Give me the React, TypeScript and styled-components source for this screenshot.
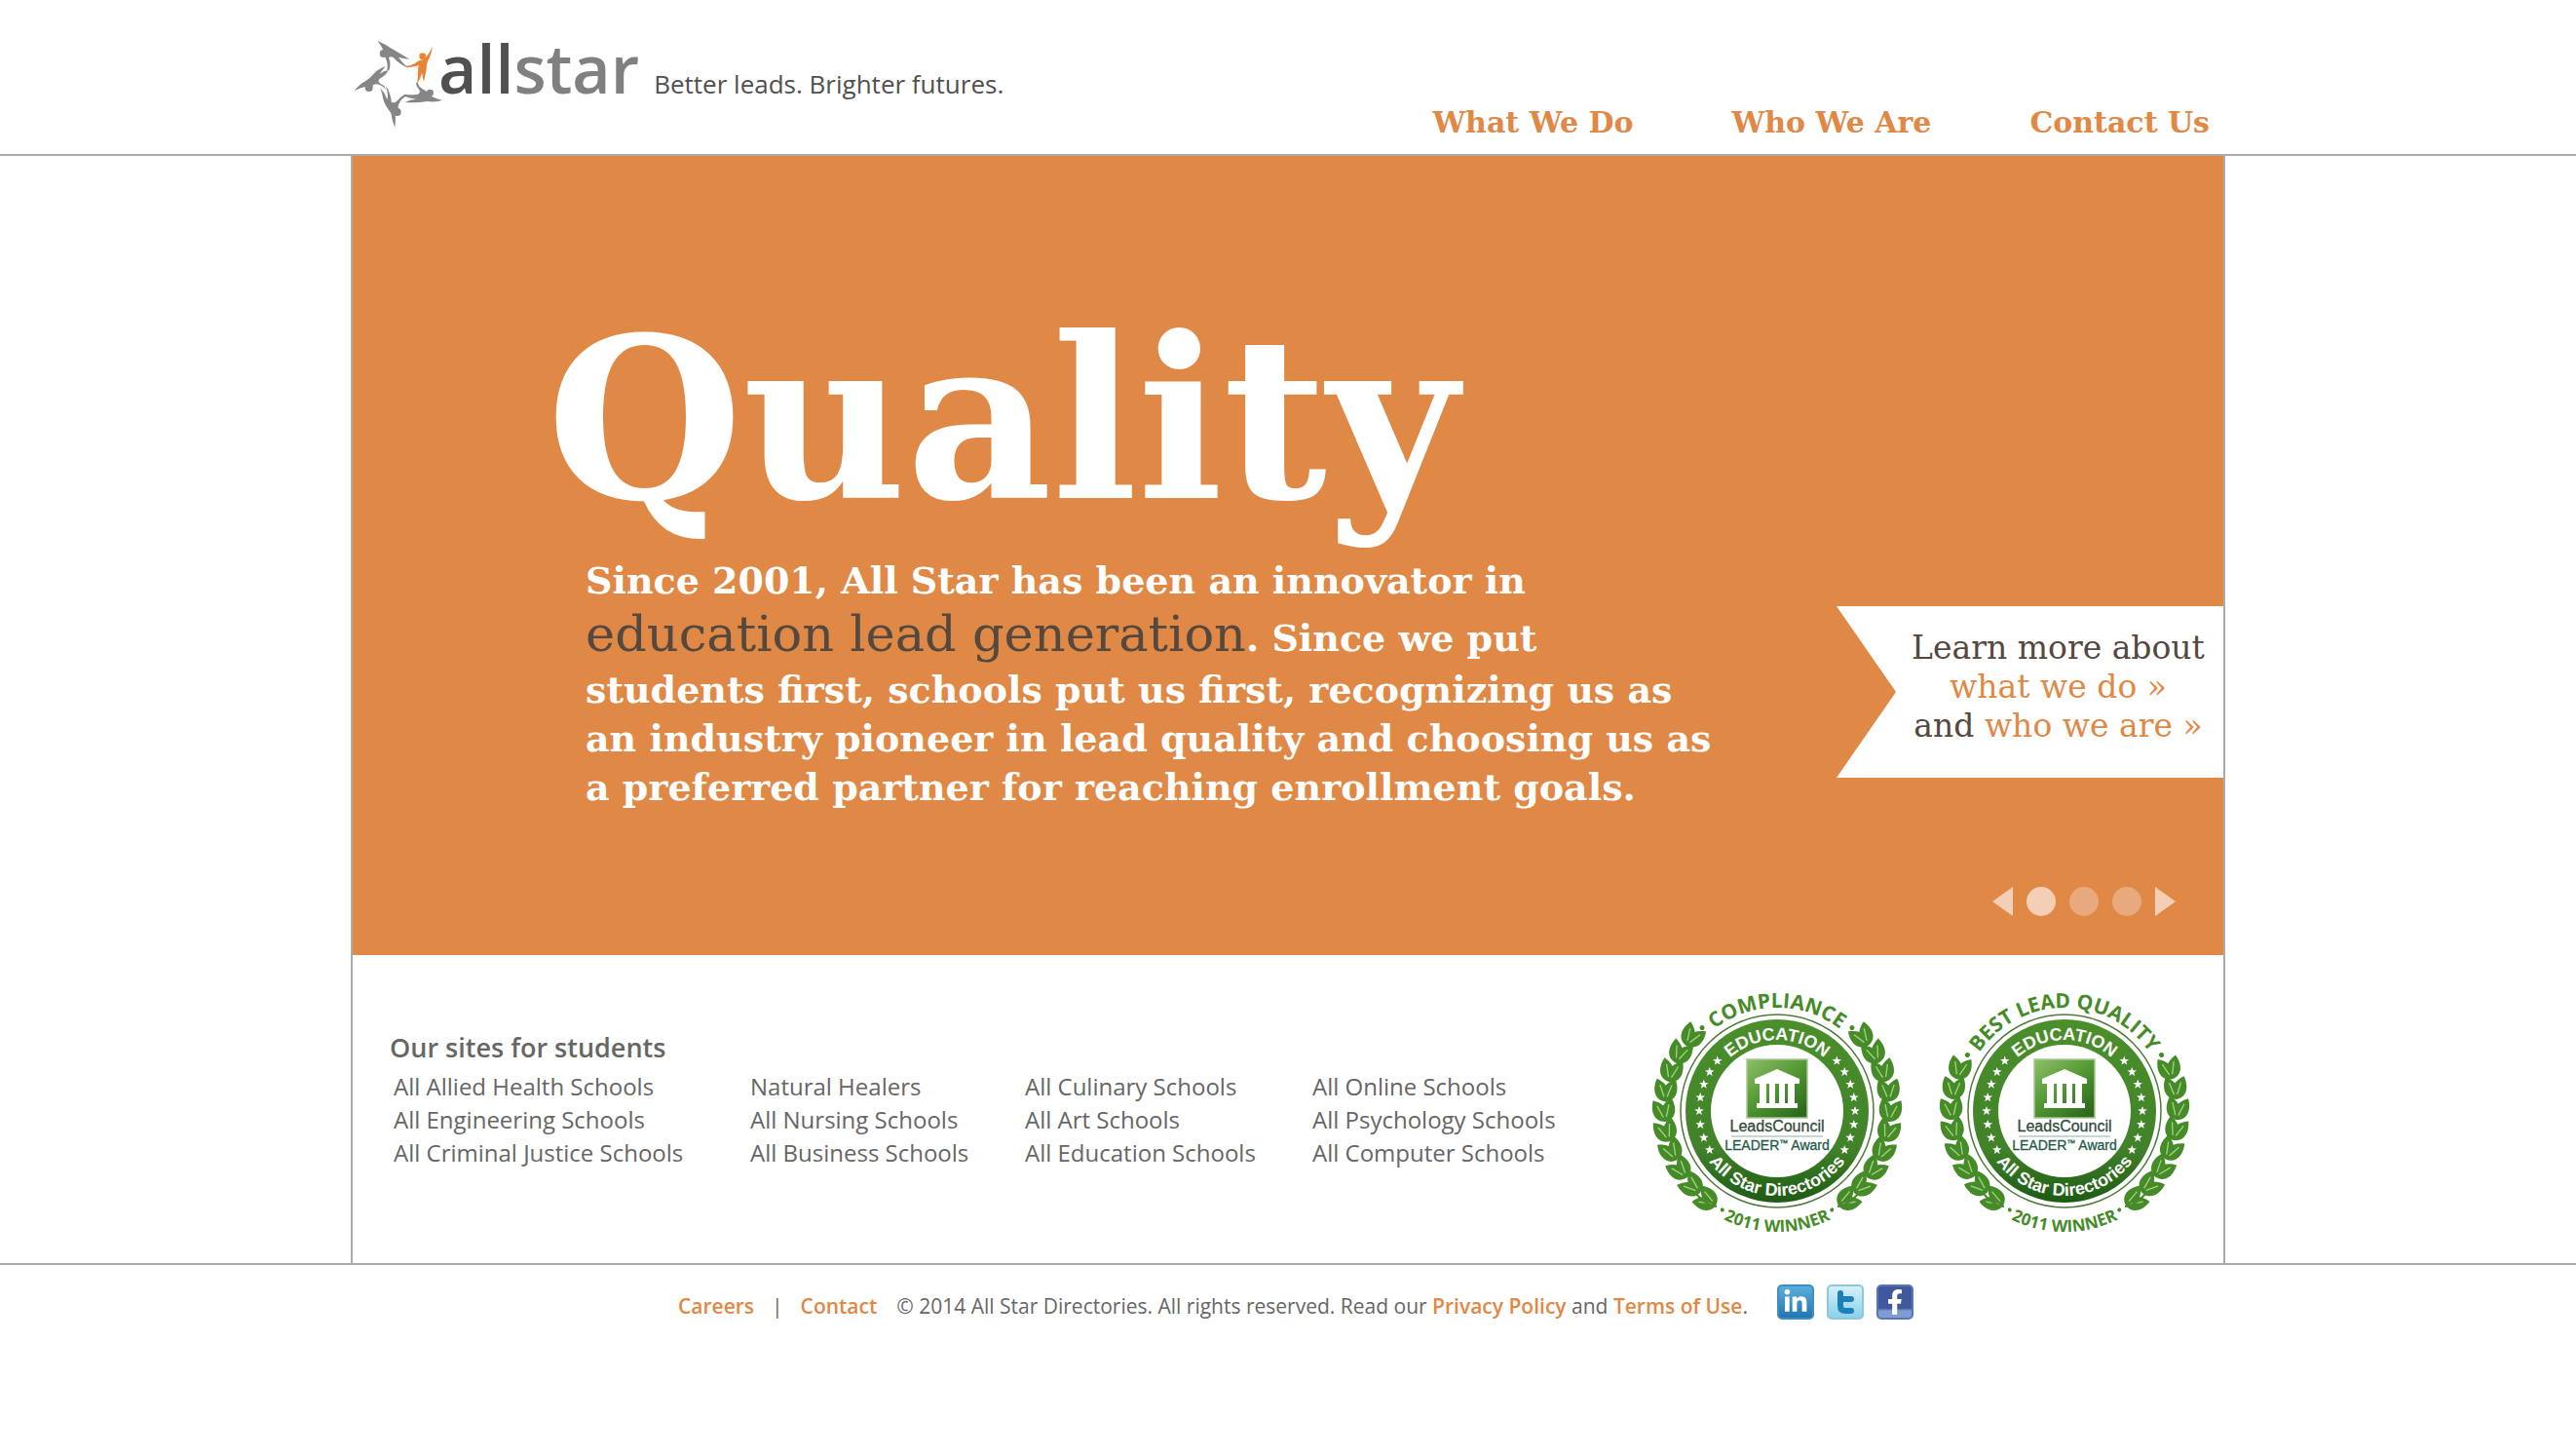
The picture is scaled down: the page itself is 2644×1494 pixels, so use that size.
import React from "react";
import styled, { createGlobalStyle } from "styled-components";
import { FaFacebookF, FaLinkedinIn } from "react-icons/fa";

const ORANGE = "#e08845";
const RULE = "#ababab";
const BROWN = "#54483f";
const GREY = "#666666";
const SLAB = '"DejaVu Serif", serif';
const SANS = '"Open Sans", "Noto Sans", sans-serif';

const GlobalStyle = createGlobalStyle`
  * { box-sizing: border-box; }
  body { margin: 0; background: #fff; color: ${GREY}; font-family: ${SANS}; }
  a { color: inherit; text-decoration: none; }
  h1, h2, p, ul { margin: 0; padding: 0; font: inherit; list-style: none; }
`;

const Column = styled.div`
  width: 100%;
  max-width: 1924px;
  margin: 0 auto;
`;

const Header = styled.header`
  border-bottom: 2px solid ${RULE};
`;

const HeaderRow = styled(Column)`
  display: flex;
  justify-content: space-between;
  min-height: 158px;
`;

const Brand = styled.a`
  display: flex;
  align-items: baseline;
  padding-top: 30px;
`;

const StarMark = styled.svg`
  align-self: flex-start;
  width: 94px;
  height: 104px;
  margin: 4px -4px 0 0;
`;

const Wordmark = styled.span`
  font-size: 68px;
  line-height: 80px;
  color: #808080;
  font-weight: 600;
`;

const WordmarkDark = styled.span`
  color: #505050;
`;

const Tagline = styled.span`
  margin-left: 15px;
  font-size: 26px;
  line-height: 40px;
  color: #505050;
`;

const Nav = styled.nav`
  display: flex;
  align-self: flex-end;
  gap: 101px;
  padding: 0 16px 12px 0;
  font: bold 30px/40px ${SLAB};
  color: ${ORANGE};
`;

const Main = styled(Column)`
  border: solid ${RULE};
  border-width: 0 2px;
`;

const Hero = styled.section`
  display: flex;
  justify-content: space-between;
  min-height: 820px;
  background: ${ORANGE};
  color: #fff;
  font-family: ${SLAB};
`;

const HeroText = styled.div`
  padding: 155px 0 0 199px;
`;

const Title = styled.h1`
  font-size: 231px;
  line-height: 230px;
  font-weight: bold;
`;

const Pitch = styled.p`
  padding: 26px 0 0 40px;
  font-size: 38px;
  line-height: 50px;
  font-weight: bold;
  white-space: nowrap;
`;

const Phrase = styled.em`
  font-style: normal;
  font-weight: normal;
  font-size: 51px;
  line-height: 60px;
  color: ${BROWN};
`;

const PitchRest = styled.span`
  display: block;
  padding-top: 2px;
`;

const HeroAside = styled.aside`
  display: flex;
  flex-direction: column;
  align-items: flex-end;
  flex: none;
  padding-top: 462px;
`;

const Ribbon = styled.p`
  width: 397px;
  height: 176px;
  padding: 23px 0 0 58px;
  background: #fff;
  clip-path: polygon(0 0, 100% 0, 100% 100%, 0 100%, 61px 50%);
  color: ${BROWN};
  font-size: 33px;
  line-height: 40px;
  text-align: center;
  white-space: nowrap;
`;

const RibbonLink = styled.a`
  color: ${ORANGE};
`;

const Pager = styled.div`
  display: flex;
  gap: 14px;
  padding: 112px 49px 0 0;
`;

const Dot = styled.button<{ $on?: boolean }>`
  width: 30px;
  height: 30px;
  padding: 0;
  border: 0;
  border-radius: 50%;
  background: ${(p) => (p.$on ? "#f3cfb6" : "#e8aa7d")};
`;

const Arrow = styled.button<{ $next?: boolean }>`
  width: 21px;
  height: 30px;
  padding: 0;
  border: 0;
  background: #f3cfb6;
  clip-path: ${(p) => (p.$next ? "polygon(0 0, 100% 50%, 0 100%)" : "polygon(100% 0, 100% 100%, 0 50%)")};
`;

const Lower = styled.section`
  display: flex;
  justify-content: space-between;
  min-height: 316px;
`;

const Sites = styled.div`
  padding: 78px 0 0 38px;
`;

const SitesTitle = styled.h2`
  font-size: 27px;
  line-height: 34px;
  font-weight: 600;
`;

const SiteColumns = styled.div`
  display: grid;
  grid-template-columns: 366px 282px 295px auto;
  padding: 6px 0 0 4px;
  font-size: 24px;
  line-height: 34px;
  white-space: nowrap;
`;

const Seals = styled.div`
  display: flex;
  gap: 25px;
  padding: 30px 28px 0 0;
`;

const SealSvg = styled.svg`
  width: 270px;
  height: 260px;
`;

const Footer = styled.footer`
  border-top: 2px solid ${RULE};
`;

const FooterRow = styled(Column)`
  display: flex;
  justify-content: center;
  align-items: flex-start;
  padding: 20px 0 0 16px;
  font-size: 21px;
  line-height: 44px;
  white-space: nowrap;
`;

const FooterLink = styled.a`
  color: ${ORANGE};
  font-weight: 600;
`;

const Divider = styled.span`
  padding: 0 18px;
`;

const Legal = styled.p`
  padding-left: 20px;
`;

const Social = styled.div`
  display: flex;
  gap: 13px;
  padding-left: 30px;
`;

const SocialLink = styled.a<{ $fill: string; $edge: string }>`
  display: flex;
  align-items: center;
  justify-content: center;
  width: 38px;
  height: 36px;
  border: 2px solid ${(p) => p.$edge};
  border-radius: 5px;
  background: ${(p) => p.$fill};
  color: #fff;
  font-size: 26px;
`;

const siteColumns = [
  ["All Allied Health Schools", "All Engineering Schools", "All Criminal Justice Schools"],
  ["Natural Healers", "All Nursing Schools", "All Business Schools"],
  ["All Culinary Schools", "All Art Schools", "All Education Schools"],
  ["All Online Schools", "All Psychology Schools", "All Computer Schools"],
];

function Star() {
  return (
    <StarMark viewBox="15 0 282 312" aria-hidden="true">
      <g fill="#868686">
        <circle cx="116" cy="63" r="12" />
        <path d="M97 23Q122 34 140 47Q160 58 196 80Q176 79 162 74Q172 90 192 107Q164 96 147 76Q138 70 132 76Q140 96 133 114L127 114Q131 96 122 76L116 56Q112 42 97 23Z" />
        <circle cx="71" cy="168" r="12" />
        <path d="M26 178Q42 157 60 148Q76 138 87 124Q100 110 122 102Q112 114 104 126Q116 116 131 114Q124 130 104 140Q92 150 118 162L124 176L118 168Q100 154 86 158L76 172L62 164Q44 168 26 178Z" />
        <circle cx="158" cy="243" r="12" />
        <path d="M106 168Q120 184 127 204Q132 190 123 164L129 172Q140 196 140 212Q150 218 160 206Q168 196 182 188L184 194Q170 202 164 216Q158 228 164 240L152 246Q154 268 151 290Q142 270 139 246Q120 222 115 204Q112 186 106 168Z" />
        <circle cx="259" cy="184" r="11" />
        <path d="M180 188Q202 192 222 188Q232 182 224 172Q216 164 216 152L222 154Q224 166 234 170Q244 176 254 184L266 196Q282 204 298 207Q276 214 250 210Q220 216 182 213Q198 204 216 203Q196 200 180 194Z" />
      </g>
      <g fill="#ea8333">
        <circle cx="236" cy="71" r="10" />
        <path d="M267 41Q262 70 252 86Q248 98 248 112Q244 132 240 150Q236 136 234 122Q230 140 219 157Q223 134 222 118Q222 108 224 100Q206 106 188 105L186 101Q206 100 222 86L240 80Q254 68 267 41Z" />
      </g>
    </StarMark>
  );
}

function starPoints(cx: number, cy: number, r: number) {
  const pts: string[] = [];
  for (let i = 0; i < 10; i++) {
    const a = (i * Math.PI) / 5 - Math.PI / 2;
    const q = i % 2 ? r * 0.42 : r;
    pts.push(`${(cx + q * Math.cos(a)).toFixed(1)},${(cy + q * Math.sin(a)).toFixed(1)}`);
  }
  return pts.join(" ");
}

/* Half of the laurel; angles run clockwise from the top of the seal. */
function Laurel({ from, pairs }: { from: number; pairs: number }) {
  const step = (147 - from) / pairs;
  const leaf = "M0 0C-10 -4 -11 -15 -3 -25C7 -17 9 -6 0 0Z";
  return (
    <g>
      {Array.from({ length: pairs }, (_, i) => {
        const deg = from + step * (i + 1);
        return (
          <g key={i} transform={`rotate(${deg}) translate(0 -115) rotate(-90)`}>
            <path d={leaf} transform="rotate(32)" />
            <path d={leaf} transform="rotate(-26) scale(-1 1)" />
            <path d="M-1 -5L-3 -18" transform="rotate(32)" stroke="#a9d088" strokeWidth="1.3" />
            <path d="M1 -5L3 -18" transform="rotate(-26)" stroke="#a9d088" strokeWidth="1.3" />
          </g>
        );
      })}
      <path d="M62 98Q72 98 84 84" fill="none" stroke="#4a8a2a" strokeWidth="2" />
    </g>
  );
}

interface SealProps {
  id: string;
  label: string;
  laurelFrom: number;
  pairs: number;
  dotAngle: number;
}

function Seal({ id, label, laurelFrom, pairs, dotAngle }: SealProps) {
  const arc = (r: number) => `M${-r} 0A${r} ${r} 0 0 1 ${r} 0`;
  const under = (r: number) => `M${-r} 0A${r} ${r} 0 0 0 ${r} 0`;
  return (
    <SealSvg viewBox="-135 -130 270 260" role="img" aria-label={`${label} award`}>
      <defs>
        <linearGradient id={`${id}-ring`} x1="0" y1="0" x2="0" y2="1">
          <stop offset="0" stopColor="#4b8f2b" />
          <stop offset="0.7" stopColor="#41822a" />
          <stop offset="1" stopColor="#1d5a14" />
        </linearGradient>
        <linearGradient id={`${id}-box`} x1="0" y1="0" x2="0.8" y2="1">
          <stop offset="0" stopColor="#8fbf68" />
          <stop offset="0.5" stopColor="#559a35" />
          <stop offset="1" stopColor="#2c6a1c" />
        </linearGradient>
        <path id={`${id}-outer`} d={arc(106)} />
        <path id={`${id}-inner`} d={arc(73)} />
        <path id={`${id}-under`} d={under(87)} />
        <path id={`${id}-base`} d={under(124)} />
      </defs>
      <circle r="99" fill="#fff" stroke="#4f7a3c" strokeWidth="1.5" />
      <circle r="94" fill={`url(#${id}-ring)`} />
      <circle r="68" fill="#fff" />
      {Array.from({ length: 8 }, (_, i) => {
        const a = ((50 + i * 10) * Math.PI) / 180;
        const x = 80 * Math.sin(a);
        const y = -80 * Math.cos(a);
        return (
          <g key={i} fill="#fff">
            <polygon points={starPoints(x, y, 5)} />
            <polygon points={starPoints(-x, y, 5)} />
          </g>
        );
      })}
      <g fill="#458b27">
        <Laurel from={laurelFrom} pairs={pairs} />
        <g transform="scale(-1 1)">
          <Laurel from={laurelFrom} pairs={pairs} />
        </g>
        {[dotAngle, -dotAngle].map((d) => (
          <circle key={d} cy="-115" r="2.5" transform={`rotate(${d})`} />
        ))}
        {[151, -151].map((d) => (
          <circle key={d} cy="-116" r="2" transform={`rotate(${d})`} />
        ))}
      </g>
      <g textAnchor="middle" fontFamily="Open Sans, sans-serif" fontWeight="700" fill="#458b27">
        <text fontSize="21">
          <textPath href={`#${id}-outer`} startOffset="50%">{label}</textPath>
        </text>
        <text fontSize="17">
          <textPath href={`#${id}-base`} startOffset="50%">2011 WINNER</textPath>
        </text>
      </g>
      <g textAnchor="middle" fontFamily="Liberation Sans, sans-serif" fontWeight="700" fill="#fff">
        <text fontSize="18">
          <textPath href={`#${id}-inner`} startOffset="50%">EDUCATION</textPath>
        </text>
        <text fontSize="18">
          <textPath href={`#${id}-under`} startOffset="50%">All Star Directories</textPath>
        </text>
      </g>
      <rect x="-31" y="-53" width="62" height="60" fill={`url(#${id}-box)`} stroke="#a9c795" strokeWidth="1.5" />
      <path
        fill="#fff"
        d="M0 -43L23 -33V-28H-23V-33ZM-18 -28H-11V-7H-18ZM-8 -28H-2V-7H-8ZM2 -28H8V-7H2ZM11 -28H18V-7H11ZM-21 -8H21V-3H-21Z"
      />
      <g textAnchor="middle" fontFamily="Liberation Sans, sans-serif" fill="#2f4a3a" stroke="#2f4a3a" strokeWidth="0.3">
        <text y="21" fontSize="16">LeadsCouncil</text>
        <text y="40" fontSize="14" fill="#1f5a48" stroke="#1f5a48">
          LEADER<tspan fontSize="9" dy="-4">™</tspan>
          <tspan dy="4"> Award</tspan>
        </text>
      </g>
      <path d="M-47 26H47" stroke="#8fb0a2" strokeWidth="1" />
    </SealSvg>
  );
}

export default function App() {
  return (
    <>
      <GlobalStyle />
      <Header>
        <HeaderRow>
          <Brand href="#">
            <Star />
            <Wordmark>
              <WordmarkDark>all</WordmarkDark>star
            </Wordmark>
            <Tagline>Better leads. Brighter futures.</Tagline>
          </Brand>
          <Nav>
            <a href="#what">What We Do</a>
            <a href="#who">Who We Are</a>
            <a href="#contact">Contact Us</a>
          </Nav>
        </HeaderRow>
      </Header>

      <Main as="main">
        <Hero>
          <HeroText>
            <Title>Quality</Title>
            <Pitch>
              Since 2001, All Star has been an innovator in
              <br />
              <Phrase>education lead generation</Phrase>. Since we put
              <PitchRest>
                students first, schools put us first, recognizing us as
                <br />
                an industry pioneer in lead quality and choosing us as
                <br />a preferred partner for reaching enrollment goals.
              </PitchRest>
            </Pitch>
          </HeroText>
          <HeroAside>
            <Ribbon>
              Learn more about
              <br />
              <RibbonLink href="#what">what we do »</RibbonLink>
              <br />
              and <RibbonLink href="#who">who we are »</RibbonLink>
            </Ribbon>
            <Pager>
              <Arrow aria-label="Previous slide" />
              <Dot $on aria-label="Slide 1" />
              <Dot aria-label="Slide 2" />
              <Dot aria-label="Slide 3" />
              <Arrow $next aria-label="Next slide" />
            </Pager>
          </HeroAside>
        </Hero>

        <Lower>
          <Sites>
            <SitesTitle>Our sites for students</SitesTitle>
            <SiteColumns>
              {siteColumns.map((names) => (
                <ul key={names[0]}>
                  {names.map((name) => (
                    <li key={name}>
                      <a href="#site">{name}</a>
                    </li>
                  ))}
                </ul>
              ))}
            </SiteColumns>
          </Sites>
          <Seals>
            <Seal id="compliance" label="COMPLIANCE" laurelFrom={44} pairs={10} dotAngle={42} />
            <Seal id="quality" label="BEST LEAD QUALITY" laurelFrom={63} pairs={8} dotAngle={60} />
          </Seals>
        </Lower>
      </Main>

      <Footer>
        <FooterRow>
          <FooterLink href="#careers">Careers</FooterLink>
          <Divider>|</Divider>
          <FooterLink href="#contact">Contact</FooterLink>
          <Legal>
            © 2014 All Star Directories. All rights reserved. Read our{" "}
            <FooterLink href="#privacy">Privacy Policy</FooterLink> and{" "}
            <FooterLink href="#terms">Terms of Use</FooterLink>.
          </Legal>
          <Social>
            <SocialLink href="#linkedin" aria-label="LinkedIn" $edge="#3f8fc4" $fill="linear-gradient(#5aaeda, #2474b0)">
              <FaLinkedinIn />
            </SocialLink>
            <SocialLink href="#twitter" aria-label="Twitter" $edge="#8cc8dc" $fill="linear-gradient(#d4f1f8, #8ad2ea)">
              <svg width="26" height="28" viewBox="0 0 26 28" fill="none" stroke="#1f7fb8" strokeWidth="6" strokeLinecap="round" strokeLinejoin="round">
                <path d="M8 5V18Q8 23 13 23H19M8 11H19" />
              </svg>
            </SocialLink>
            <SocialLink href="#facebook" aria-label="Facebook" $edge="#5a76b4" $fill="linear-gradient(#40599c 0 70%, #7f9bd0 78%)">
              <FaFacebookF />
            </SocialLink>
          </Social>
        </FooterRow>
      </Footer>
    </>
  );
}
